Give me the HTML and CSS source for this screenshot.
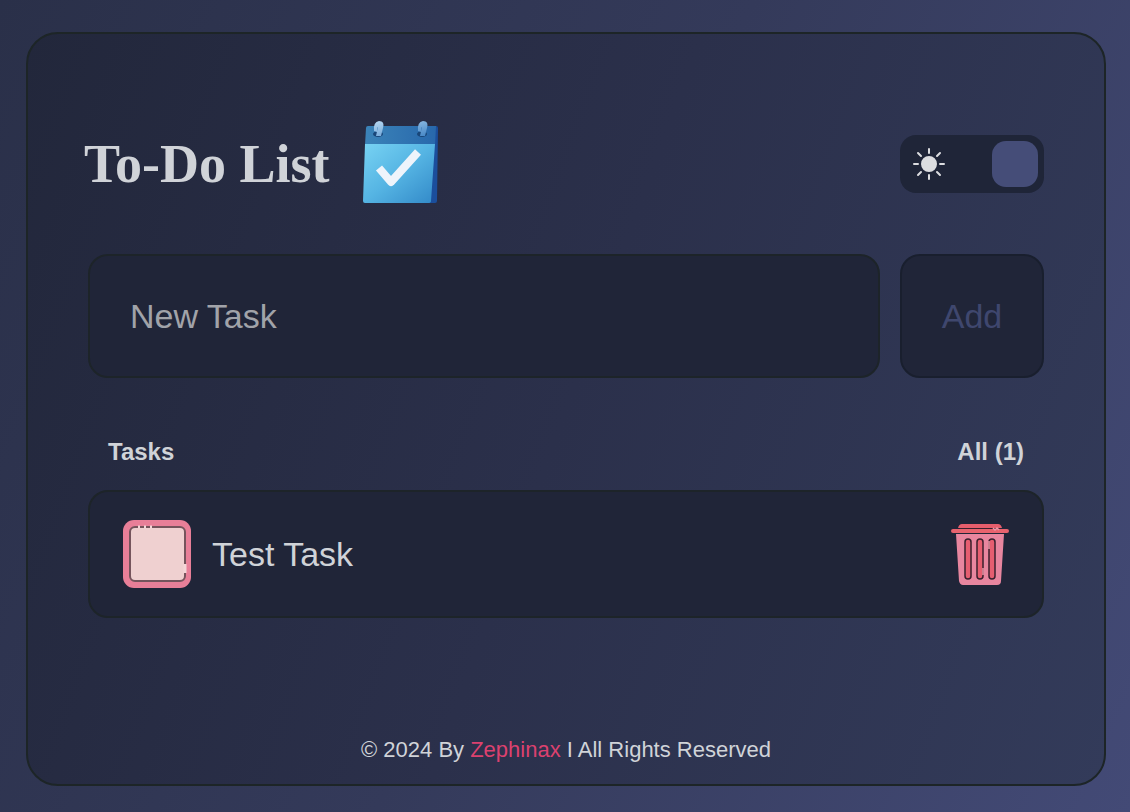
FILE: index.html
```html
<!DOCTYPE html>
<html lang="en">
<head>
<meta charset="utf-8">
<meta name="viewport" content="width=device-width, initial-scale=1">
<title>To-Do List</title>
<link rel="stylesheet" href="styles.css">
</head>
<body>
<main class="card">
  <header class="header">
    <div class="brand">
      <h1 class="title">To-Do List</h1>
      <svg class="logo" viewBox="0 2 80 84" aria-hidden="true">
        <defs>
          <linearGradient id="page" x1="0" y1="0" x2="1" y2="1">
            <stop offset="0" stop-color="#78d3f3"/><stop offset=".5" stop-color="#55b4e3"/><stop offset="1" stop-color="#3289c8"/>
          </linearGradient>
          <linearGradient id="band" x1="0" y1="0" x2="1" y2="0">
            <stop offset="0" stop-color="#3b83b8"/><stop offset="1" stop-color="#2868ac"/>
          </linearGradient>
          <linearGradient id="ring" x1="0" y1="0" x2="1" y2="1">
            <stop offset="0" stop-color="#b9daf4"/><stop offset="1" stop-color="#4586c6"/>
          </linearGradient>
        </defs>
        <path d="M70 6h6q2 0 2 2l-1 73q0 2-2 2h-9z" fill="#1b4e9c"/>
        <path d="M8 6h68l-1 19H5l1-17q0-2 2-2z" fill="url(#band)"/>
        <path d="M5 24h70l-4 57q0 2-3 2H5q-2 0-2-2z" fill="url(#page)"/>
        <ellipse cx="18" cy="14" rx="5" ry="3" fill="#194679"/>
        <ellipse cx="62" cy="14" rx="5" ry="3" fill="#194679"/>
        <path d="M14 11q-1-9 5-10 6 0 4 7l-2 8h-5l2-9q-1 0-1 5zM58 11q-1-9 5-10 6 0 4 7l-2 8h-5l2-9q-1 0-1 5z" fill="url(#ring)"/>
        <path d="M19 48l12 14 27-30" fill="none" stroke="#eef4fb" stroke-width="8" stroke-linejoin="round"/>
      </svg>
    </div>
    <button class="switch" type="button" role="switch" aria-checked="true" aria-label="Dark theme">
      <svg class="sun" viewBox="0 0 34 34" aria-hidden="true">
        <circle cx="17" cy="17" r="7"/>
        <path d="M17 2v4M17 28v4M2 17h4M28 17h4M6 6l3 3M25 25l3 3M6 28l3-3M25 9l3-3"/>
      </svg>
      <span class="knob"></span>
    </button>
  </header>

  <form class="entry">
    <input class="entry-input" type="text" placeholder="New Task" aria-label="New Task">
    <button class="entry-add" type="button">Add</button>
  </form>

  <section>
    <div class="list-head">
      <h2 class="label">Tasks</h2>
      <span class="label">All (1)</span>
    </div>
    <ul class="tasks">
      <li class="task">
        <label class="task-label">
          <span class="check">
            <input class="check-input" type="checkbox">
            <svg class="check-art" viewBox="0 0 68 68" aria-hidden="true">
              <rect width="68" height="68" rx="11" fill="#e87f98"/>
              <rect x="7" y="7" width="55" height="54" rx="5" fill="#efd0d0" stroke="#75545c" stroke-width="2"/>
              <path d="M15 7h2M21 7h2M27 7h2M62 44v9" stroke="#f3d6d7" stroke-width="3"/>
            </svg>
          </span>
          <span>Test Task</span>
        </label>
        <button class="delete" type="button" aria-label="Delete task">
          <svg class="bin" viewBox="0 0 58 62" aria-hidden="true">
            <path d="M7 5q1-4 4-4h36q3 0 4 4z" fill="#e65e6c"/>
            <rect y="6" width="58" height="4" rx="2" fill="#e8636e"/>
            <path d="M9 5.500h40" stroke="#3a202d"/>
            <path d="M5 11h48l-3 47q0 4-4 4H12q-3 0-4-4z" fill="#e8869f"/>
            <g fill="#e65e70" stroke="#3a202d" stroke-width="1.500">
              <rect x="14" y="16" width="6" height="40" rx="3"/>
              <rect x="26" y="16" width="6" height="40" rx="3"/>
              <rect x="38" y="16" width="6" height="40" rx="3"/>
            </g>
            <path d="M42 5l2 2 2-2 2 2M38 18v8M32 45v7" fill="none" stroke="#ed98a8" stroke-width="1.500"/>
          </svg>
        </button>
      </li>
    </ul>
  </section>

  <footer class="footer">© 2024 By <a class="author" href="#">Zephinax</a> I All Rights Reserved</footer>
</main>
</body>
</html>
```
FILE: styles.css
```css
*, *::before, *::after { box-sizing: border-box; }

body {
  margin: 0;
  min-height: 100vh;
  padding: 32px 24px 26px 26px;
  display: flex;
  background: linear-gradient(115deg, #2a3049 0%, #343a5a 50%, #434a76 100%);
  color: #d0d3d8;
  font-family: "Liberation Sans", Arial, sans-serif;
}

button, input { font: inherit; color: inherit; }
h1, h2, ul { margin: 0; padding: 0; }

.card {
  flex: 1;
  display: flex;
  flex-direction: column;
  padding: 86px 60px 20px;
  border: 2px solid #1d2527;
  border-radius: 32px;
  background: linear-gradient(110deg, #22273b 0%, #2b304b 50%, #333b5a 100%);
}

.header {
  display: flex;
  align-items: center;
  justify-content: space-between;
  height: 88px;
  margin-bottom: 46px;
}

.brand {
  display: flex;
  align-items: center;
  gap: 30px;
  margin-left: -4px;
}

.title {
  font: bold 54px/60px "Liberation Serif", serif;
}

.logo { width: 80px; height: 84px; overflow: visible; }

.switch {
  display: flex;
  align-items: center;
  justify-content: space-between;
  width: 144px;
  height: 58px;
  padding: 6px 6px 6px 12px;
  border: 0;
  border-radius: 16px;
  background: #1f2538;
}

.sun {
  width: 34px;
  height: 34px;
  fill: #dcdde0;
  stroke: #dcdde0;
  stroke-width: 2;
  stroke-linecap: round;
}

.knob {
  width: 46px;
  height: 46px;
  border-radius: 14px;
  background: #454d78;
}

.entry {
  display: flex;
  gap: 20px;
  margin-bottom: 60px;
  font-size: 34px;
}

.entry-input, .entry-add {
  height: 124px;
  border: 2px solid #1d2429;
  border-radius: 20px;
  background: #202538;
}

.entry-input {
  flex: 1;
  min-width: 0;
  padding: 0 40px;
}

.entry-input::placeholder { color: #a1a3a9; opacity: 1; }

.entry-add {
  width: 144px;
  padding: 0;
  border-color: #191f2e;
  color: #3f476e;
}

.list-head {
  display: flex;
  justify-content: space-between;
  padding: 0 20px;
  margin-bottom: 24px;
}

.label { font-size: 24px; line-height: 28px; font-weight: bold; }

.tasks { list-style: none; }

.task {
  display: flex;
  align-items: center;
  justify-content: space-between;
  height: 128px;
  padding: 0 33px;
  border: 2px solid #1d2429;
  border-radius: 20px;
  background: #202538;
  font-size: 34px;
}

.task-label {
  display: flex;
  align-items: center;
  gap: 21px;
}

.check {
  display: grid;
  width: 68px;
  height: 68px;
}

.check-input, .check-art {
  grid-area: 1 / 1;
  width: 100%;
  height: 100%;
  margin: 0;
}

.check-input { appearance: none; }
.check-art { pointer-events: none; }

.delete {
  padding: 0;
  border: 0;
  background: none;
}

.bin { display: block; width: 58px; height: 62px; }

.footer {
  margin-top: auto;
  text-align: center;
  font-size: 22px;
  line-height: 28px;
}

.author { color: #dc416f; text-decoration: none; }
```
